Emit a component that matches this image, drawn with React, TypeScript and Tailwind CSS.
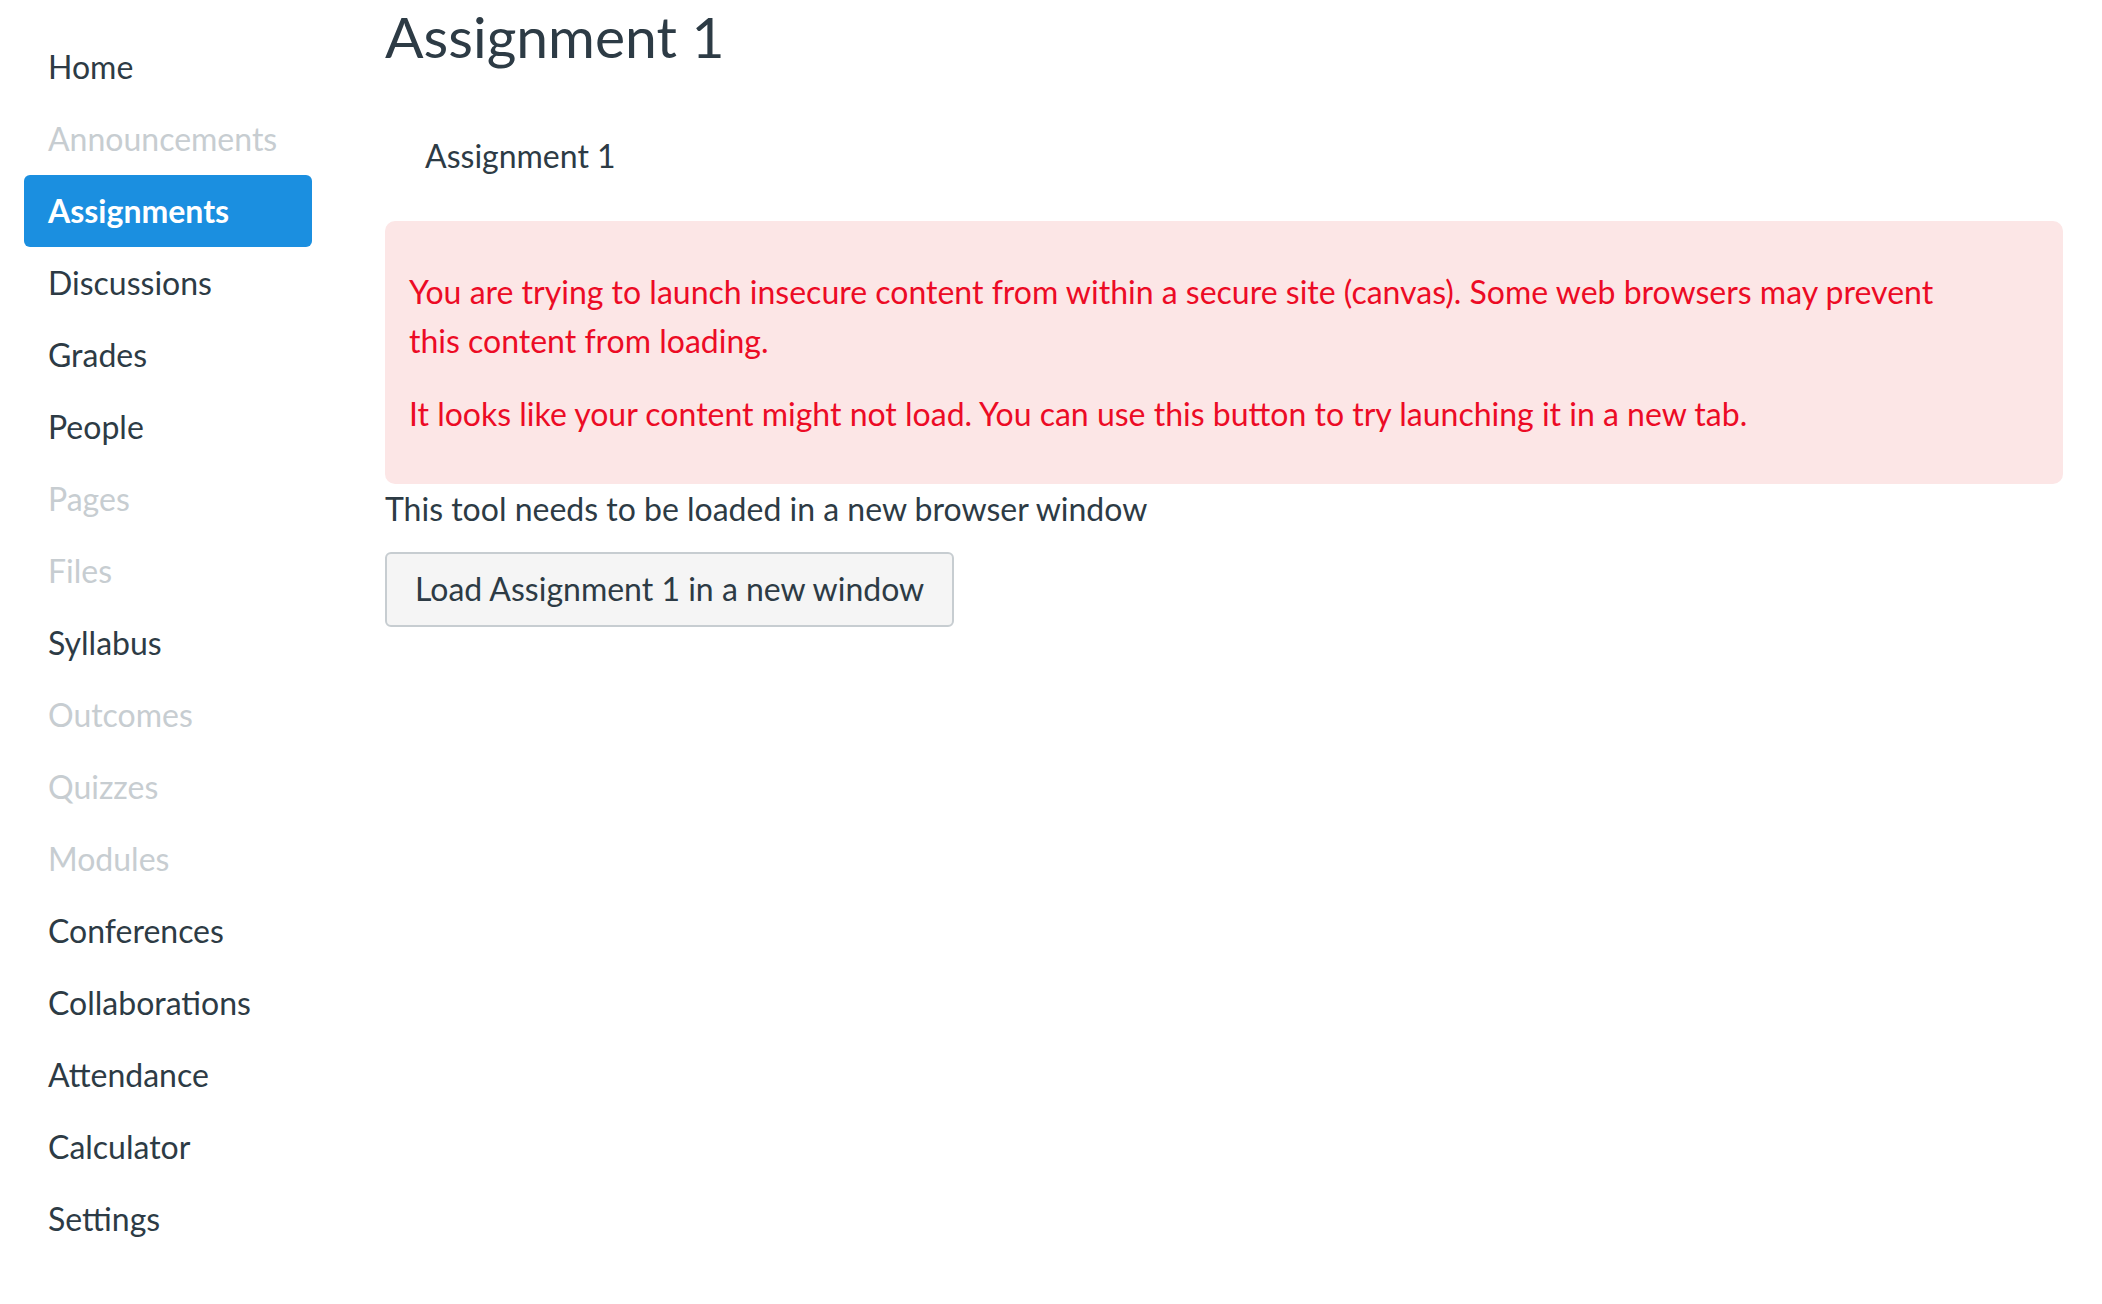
const navItems = [
  { label: "Home", enabled: true },
  { label: "Announcements", enabled: false },
  { label: "Assignments", enabled: true, active: true },
  { label: "Discussions", enabled: true },
  { label: "Grades", enabled: true },
  { label: "People", enabled: true },
  { label: "Pages", enabled: false },
  { label: "Files", enabled: false },
  { label: "Syllabus", enabled: true },
  { label: "Outcomes", enabled: false },
  { label: "Quizzes", enabled: false },
  { label: "Modules", enabled: false },
  { label: "Conferences", enabled: true },
  { label: "Collaborations", enabled: true },
  { label: "Attendance", enabled: true },
  { label: "Calculator", enabled: true },
  { label: "Settings", enabled: true },
];

export default function App() {
  return (
    <div className="min-h-screen bg-white flex font-['Lato','Noto_Sans',sans-serif] text-[#2d3b45]">
      {/* Course navigation */}
      <nav className="w-[385px] shrink-0 pt-[31px] pl-6">
        <ul className="flex flex-col">
          {navItems.map((item) => (
            <li key={item.label}>
              <a
                className={
                  item.active
                    ? "flex items-center h-[72px] w-[288px] pl-6 rounded-md bg-[#1b8fe0] text-white font-bold text-[32px]"
                    : item.enabled
                    ? "flex items-center h-[72px] w-[288px] pl-6 text-[32px] text-[#2d3b45]"
                    : "flex items-center h-[72px] w-[288px] pl-6 text-[32px] text-[#c7cdd1]"
                }
              >
                {item.label}
              </a>
            </li>
          ))}
        </ul>
      </nav>

      {/* Main content */}
      <main className="flex-1 pr-[39px]">
        <h1 className="text-[57px] leading-[1.2] mt-[2px] font-normal">Assignment 1</h1>

        <div className="pl-10 mt-[67px] text-[32px] leading-[1.2]">Assignment 1</div>

        {/* Insecure content warning */}
        <div className="mt-[45px] rounded-[10px] bg-[#fce6e6] text-[#ec0b25] pl-6 pr-[100px] py-[22px] text-[32px] leading-[49px]">
          <p className="my-6">
            You are trying to launch insecure content from within a secure site (canvas). Some web browsers may prevent
            this content from loading.
          </p>
          <p className="my-6">
            It looks like your content might not load. You can use this button to try launching it in a new tab.
          </p>
        </div>

        <p className="text-[32px] leading-[49px]">This tool needs to be loaded in a new browser window</p>

        <button className="mt-[19px] h-[75px] px-[28px] rounded-md border-2 border-[#c7cdd1] bg-[#f5f5f5] text-[32px] text-[#2d3b45]">
          Load Assignment 1 in a new window
        </button>
      </main>
    </div>
  );
}
